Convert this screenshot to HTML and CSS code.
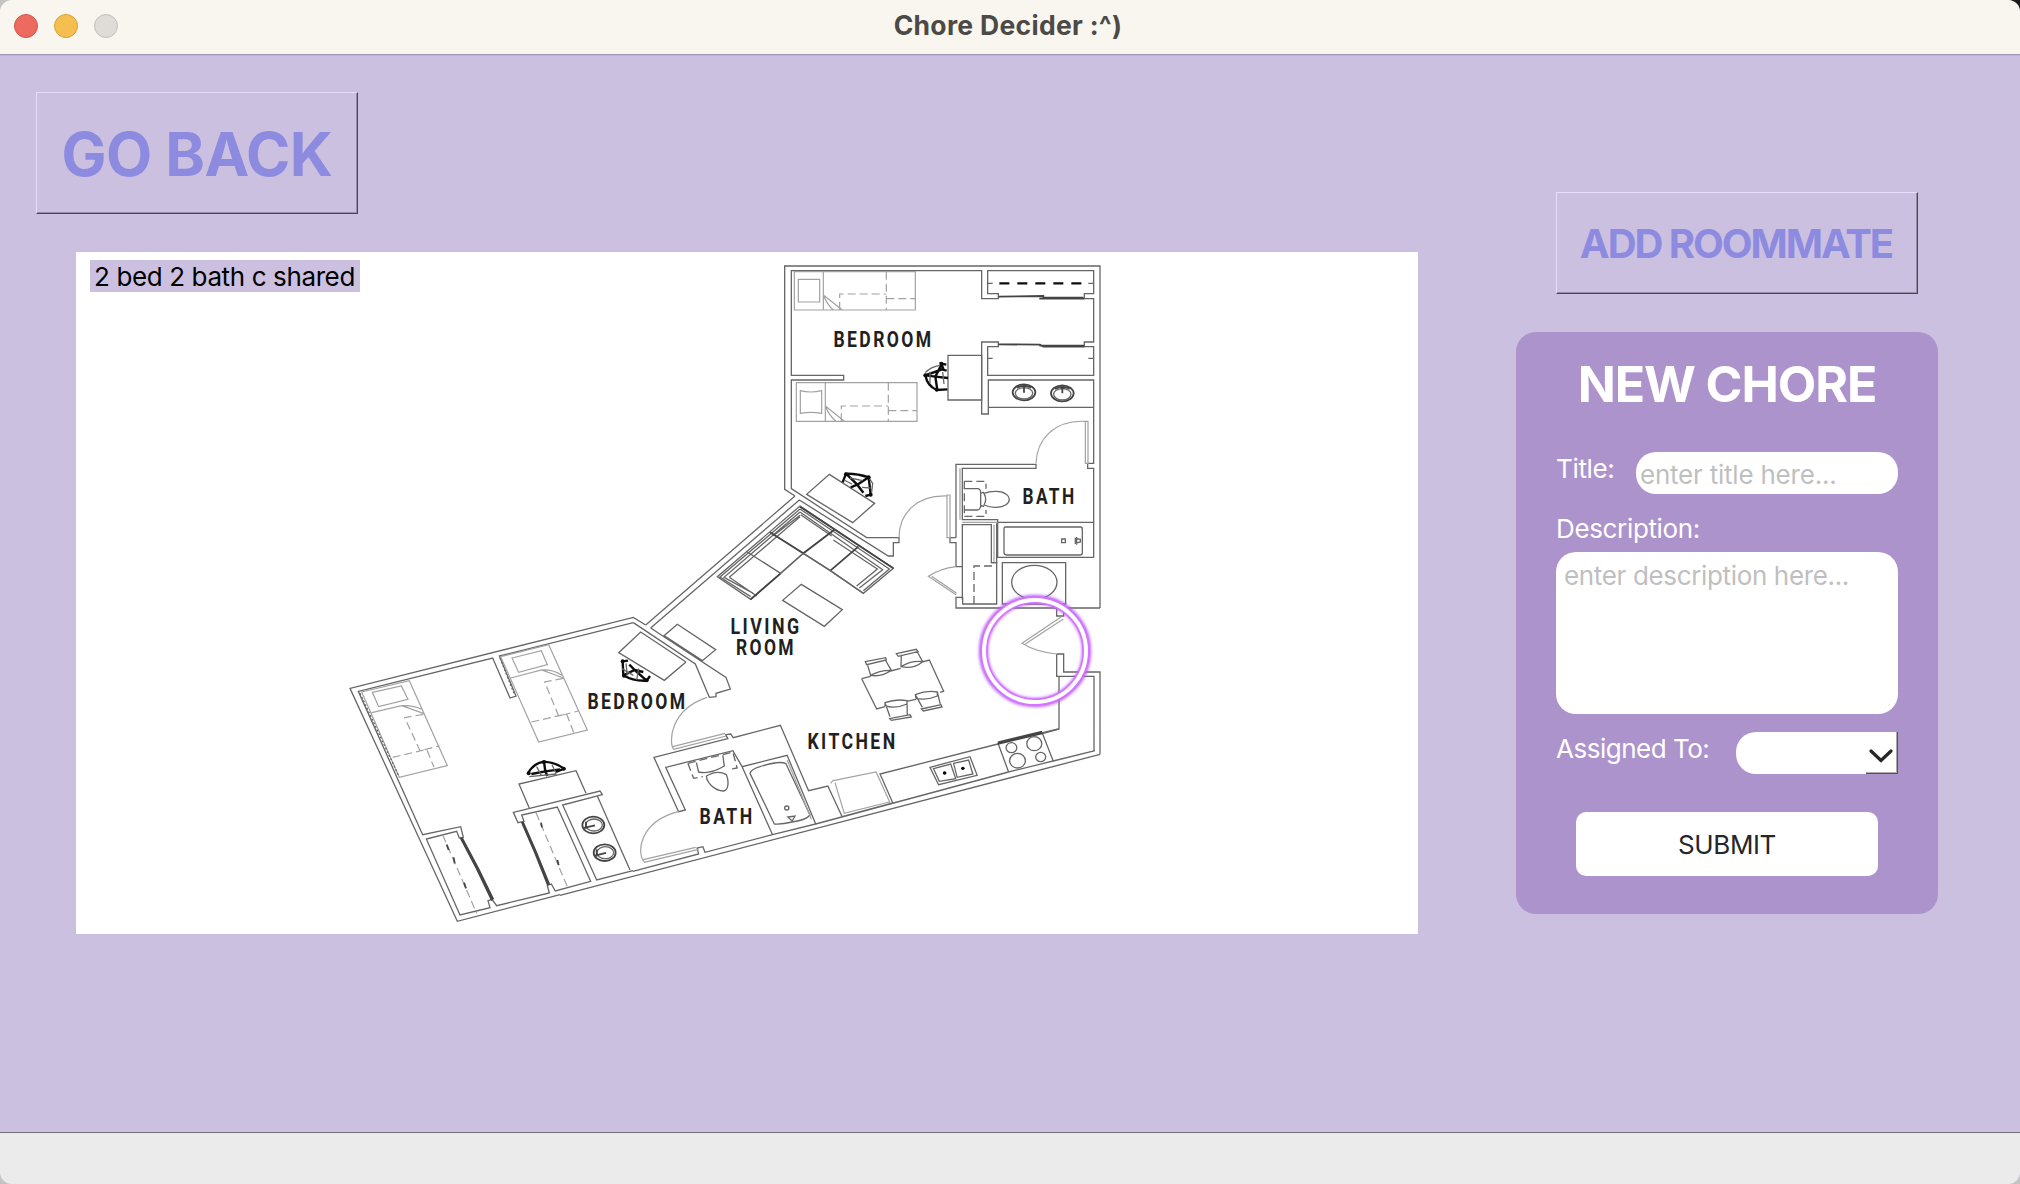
FILE: index.html
```html
<!DOCTYPE html>
<html lang="en">
<head>
<meta charset="utf-8">
<title>Chore Decider :^)</title>
<link rel="stylesheet" href="styles.css">
</head>
<body>
<div class="window">
  <header class="titlebar">
    <div class="lights"><i class="light close"></i><i class="light minimize"></i><i class="light disabled"></i></div>
    <h1 class="window-title">Chore Decider :^)</h1>
  </header>
  <main class="content">
    <section class="left">
      <button class="raised go-back"><span>GO BACK</span></button>
      <div class="plan">
        <svg class="plan-drawing" viewBox="76 252 1342 682">
          <!-- upper bedroom, closets and bath -->
          <g transform="translate(770 250) scale(.33333)">
            <path class="w" d="M75 738L44 718V48H990V1074M-373 1125L75 738M-358 1134L88 750L355 918H370V878H387V863H290L64 716V390H221V376H64V62H635V146H685V131H653V62H971V131H943V146H971V276H943V290H971V376H653V290H685V276H635V492H655V390H971V640H953V655H971V923"/>
            <path class="w" d="M655 472H971M534 316H635V450H534ZM558 863V643H798V655H577V809H683V922H971M577 1050V824H664V938H680V820M683 817H971M558 863H540V878H558V950M178 673L314 760L248 818L110 733Z"/>
            <path class="g" d="M531 735H540V863H531ZM946 514H954V640H946ZM387 863C387 790 440 735 531 738M798 640C800 570 850 510 946 514M577 817H683M570 655V809M672 824V938"/>
            <path class="g" d="M73 65H160V180H73ZM85 88H149V156H85ZM160 180H436V65H160M160 135L217 180M160 135Q172 165 190 180M79 398H166V514H79ZM91 422Q122 430 155 422V490Q122 484 91 490ZM166 514H441V398H166M166 468L223 514M166 468Q178 498 198 514"/>
            <path class="g d" d="M349 65V180M209 180V132H349M349 146H436M355 398V514M214 514V468H355M355 482H441"/>
            <path class="k" d="M688 100H945" stroke-dasharray="10 8"/>
            <path class="w" d="M653 100H668M955 100H971M653 325H668M955 325H971"/>
            <path class="m" d="M685 140L820 138V143H940M808 146H943M685 283L810 284L820 290H943M808 287H943"/>
            <ellipse class="m" cx="762" cy="427" rx="34" ry="24"/><ellipse class="w" cx="762" cy="430" rx="26" ry="17"/>
            <ellipse class="m" cx="877" cy="430" rx="34" ry="24"/><ellipse class="w" cx="877" cy="433" rx="26" ry="17"/>
            <path class="m" d="M740 413Q762 402 784 413M762 428V408L770 406M855 417Q877 404 899 417M872 414H884M877 430V414"/>
            <path class="w" d="M583 716H625Q632 718 632 730V766Q632 779 622 780H583M642 730Q660 723 680 724C706 725 718 738 718 748C718 760 704 772 680 772Q660 773 642 765Q652 748 642 730ZM632 730L642 726M632 766L642 770"/>
            <path class="w d" d="M583 694H648V716M583 799H648V780M583 694V799"/>
            <path class="k" d="M529 344L514 341L520 357L466 376Q472 408 500 420L532 418M466 376L496 380L534 384M496 380L514 345M496 380L502 420M505 356L530 362"/>
            <path class="w" d="M466 368Q482 350 510 346M480 365V400M518 366L522 402"/>
            <path class="k" d="M218 697L228 671Q262 670 296 682L302 734L286 738M228 671L262 704L296 682M262 704L242 712M262 704L280 728"/>
            <path class="w" d="M296 682L308 700L304 734M240 684L278 692M222 690L246 702M276 712L302 714"/>
            <path class="w" d="M706 831H932Q937 831 937 838V909Q937 915 930 915H710Q702 915 702 907V838Q702 831 706 831ZM875 867H886V878H875ZM916 865L931 868V876L916 880ZM920 861V884"/>
            <g class="dots"><circle cx="466" cy="376" r="6"/><circle cx="514" cy="341" r="6"/><circle cx="500" cy="420" r="5"/><circle cx="228" cy="673" r="6"/><circle cx="296" cy="682" r="6"/><circle cx="302" cy="734" r="6"/></g>
          </g>
          <!-- entry, laundry and kitchen corner -->
          <g transform="translate(920 470) scale(.33333)">
            <path class="w" d="M540 414H108V382H128V402H230V278H213M108 290H128M247 278H437V402H247ZM410 414V438H431V414M410 552H431V606H540V853M410 552V619H522V843M417 619V777L365 792"/>
            <ellipse class="w" cx="343" cy="337" rx="68" ry="51"/>
            <path class="g" d="M108 290Q60 296 25 319L108 374M35 319L110 370M424 440L306 520Q350 547 410 552M430 447L316 522"/>
            <path class="w d" d="M162 402V288H228"/>
          </g>
          <!-- living room -->
          <g transform="translate(640 490) scale(.33333)">
            <path class="w" d="M112 403L227 479L187 512L72 437ZM76 441L184 512M484 283L607 359L553 409L428 331ZM32 414L258 562L271 597L228 610V620L208 622L166 522L-20 398M138 516L73 571L-64 488L2 426L138 516"/>
            <path class="w" d="M480 48L760 235L670 310L571 242L490 190L422 250L332 328L232 260ZM480 57L748 237L670 302M480 66L728 239L658 294M480 76L400 137M482 74L575 138M480 57L240 261L332 320M480 66L252 262L340 310M268 262L350 318M268 262L480 80M580 150L712 237L650 288"/>
            <path class="m" d="M390 127L490 190L582 120M571 242L655 170M422 250L332 328M480 50L760 235"/>
            <path class="w" d="M490 190L571 242L670 310M490 190L422 250L322 186"/>
            <path class="w" d="M665 566L692 559M752 543L782 535M846 516L868 510L911 604L900 607M828 628L800 634M735 650L710 657L665 566M683 526L692 556Q725 562 754 541L736 510M690 557Q720 540 754 541M676 515L737 503L739 510L680 524ZM784 494L783 530Q820 538 848 515L832 486M783 530Q815 510 848 515M769 491L829 478L834 485L775 499ZM735 638L750 680M801 632L802 675M735 638Q768 626 801 632V642Q765 658 735 647ZM749 686L810 674L814 681L754 691ZM826 614L847 652M892 606L901 643M826 614Q860 600 892 606V618Q860 632 828 625ZM844 657L903 644L906 651L850 663Z"/>
          </g>
          <!-- lower bedroom -->
          <g transform="translate(340 610) scale(.33333)">
            <path class="w" d="M917 45L880 22L30 235L352 934L660 854M880 38L478 138L528 258L510 264L458 144L55 244L248 674L362 650L370 682L358 684L350 664L259 687L360 915L450 893L444 872L456 868L470 887L628 849L622 826L634 822L646 843L752 814L652 591L545 615L552 634L534 638L520 607L780 543L787 554L668 585L770 810L879 782M772 558L870 780M568 595L537 522L708 482L738 550"/>
            <path class="g" d="M65 246L208 212L322 467L178 502ZM97 247L184 228L204 268L116 290ZM95 308L185 287L250 310M185 287Q220 285 245 298M482 140L626 104L742 360L596 396ZM516 144L604 122L622 164L536 187ZM512 204L605 180L670 204M605 180Q640 178 665 196"/>
            <path class="g d" d="M250 313L194 323L240 422L298 408M158 442L260 418L282 472M670 205L614 216L656 318L715 303M574 336L680 312L702 370M308 675L410 910M588 608L684 835"/>
            <path class="w" d="M60 250L175 495M480 144L522 250" stroke-dasharray="2 2" stroke-width="3"/>
            <path class="m" d="M362 684L410 776L456 872M366 684L415 776L460 868M545 636L585 728L624 826M549 636L589 728L628 824M320 704L326 720M341 742L344 760M372 818L378 835M603 638L606 652M652 750L656 766"/>
            <ellipse class="m" cx="760" cy="645" rx="33" ry="25"/><ellipse class="w" cx="762" cy="645" rx="25" ry="18"/><path class="m" d="M732 654L765 646M738 635V656"/>
            <ellipse class="m" cx="794" cy="728" rx="33" ry="25"/><ellipse class="w" cx="796" cy="728" rx="25" ry="18"/><path class="m" d="M765 737L798 729M770 718V740"/>
            <path class="k" d="M564 490Q580 460 612 455Q650 458 672 476L648 486M612 455L616 484L574 492M616 484L660 478M616 484L622 498"/>
            <path class="w" d="M590 470L604 496M636 464L648 490M568 500L650 492"/>
            <path class="k" d="M848 154L850 196Q880 214 920 212L930 198M848 154L864 152M850 196L884 180L920 212M884 180L868 164M884 180L910 186"/>
            <path class="w" d="M858 160L862 196M846 176L880 196M896 176L890 210"/>
            <g class="dots"><circle cx="566" cy="490" r="6"/><circle cx="612" cy="456" r="6"/><circle cx="671" cy="476" r="6"/><circle cx="848" cy="154" r="6"/><circle cx="852" cy="197" r="6"/><circle cx="920" cy="211" r="6"/></g>
          </g>
          <!-- lower bath and kitchen counter -->
          <g transform="translate(560 680) scale(.357143 .33333)">
            <path class="w" d="M204 574L388 522L384 504L400 500L406 517L595 464L716 432L636 226L510 260L484 212L296 262L351 390L332 395L263 232L470 176L464 164L478 162L485 173L617 136L696 332L750 318L790 410L932 369L896 282L1226 192M0 646L1512 223M1381 243L1498 212M1226 188L1256 276L1381 243L1350 158L1396 147M716 432L1256 276M510 260L595 464M532 280Q535 268 560 260Q610 242 632 250L700 405Q690 420 650 426Q620 434 600 432ZM1036 262L1148 230L1168 286L1060 314ZM1046 266L1094 252L1108 296L1062 304ZM1102 250L1144 240L1156 282L1112 292Z"/>
            <path class="g" d="M318 208C305 190 305 90 412 52M318 208L465 168M316 200L462 160M235 545C215 520 220 425 332 395M235 547L388 508M233 539L380 502M765 302L885 276L924 368M770 308L796 400L922 366M758 310L765 300M636 240L704 418"/>
            <path class="m" d="M1226 192L1350 160M1226 187L1350 155"/>
            <path class="w" d="M382 248L388 276Q420 284 460 258L456 226M410 288Q440 268 466 284C472 300 474 330 458 333C430 332 410 305 410 288Z"/>
            <path class="w d" d="M358 250L374 295L400 290M358 250L484 216L496 264L476 268"/>
            <circle class="w" cx="1264" cy="203" r="15"/><circle class="w" cx="1328" cy="191" r="21"/><circle class="w" cx="1281" cy="242" r="22"/><circle class="w" cx="1346" cy="231" r="14"/>
            <circle class="w" cx="635" cy="384" r="6"/><path class="w" d="M638 411L658 408L650 423Z"/>
            <circle cx="1077" cy="279" r="5"/><circle cx="1128" cy="265" r="5"/>
          </g>
          <g class="room">
            <text x="833.5" y="347" textLength="100" lengthAdjust="spacingAndGlyphs">BEDROOM</text>
            <text x="1022.5" y="503.5" textLength="54" lengthAdjust="spacingAndGlyphs">BATH</text>
            <text x="730.5" y="633.5" textLength="71" lengthAdjust="spacingAndGlyphs">LIVING</text>
            <text x="736" y="655" textLength="60" lengthAdjust="spacingAndGlyphs">ROOM</text>
            <text x="587.5" y="708.5" textLength="100" lengthAdjust="spacingAndGlyphs">BEDROOM</text>
            <text x="807.5" y="748.5" textLength="90" lengthAdjust="spacingAndGlyphs">KITCHEN</text>
            <text x="699.5" y="823.5" textLength="55" lengthAdjust="spacingAndGlyphs">BATH</text>
          </g>
          <circle class="glow" cx="1035" cy="651" r="51.5"/>
          <circle class="ring-color" cx="1035" cy="651" r="51"/>
          <circle class="ring" cx="1035" cy="651" r="51"/>
        </svg>
        <span class="plan-name">2 bed 2 bath c shared</span>
      </div>
    </section>
    <aside class="right">
      <button class="raised add-roommate"><span>ADD ROOMMATE</span></button>
      <form class="card">
        <h2 class="card-title"><span>NEW CHORE</span></h2>
        <div class="row title-row"><label>Title:</label><div class="field title-field">enter title here...</div></div>
        <label class="description-label">Description:</label>
        <div class="field description-field">enter description here...</div>
        <div class="row assigned-row"><label>Assigned To:</label>
          <div class="combo"><span class="drop"><svg width="24" height="14" viewBox="0 0 24 14"><path d="M2 2L12 11.5L22 2" fill="none" stroke="#262626" stroke-width="3.2" stroke-linecap="round"/></svg></span></div>
        </div>
        <button type="button" class="submit">SUBMIT</button>
      </form>
    </aside>
  </main>
  <footer class="statusbar"></footer>
</div>
</body>
</html>
```
FILE: styles.css
```css
* { box-sizing: border-box; }
body { margin: 0; background: linear-gradient(90deg, transparent 50%, #1c1c1c 50%) 0 0 / 100% 100px no-repeat, #c4c4c4; font-family: Inter, "Liberation Sans", sans-serif; }
.window { width: 2020px; height: 1184px; display: flex; flex-direction: column; border-radius: 12px; overflow: hidden; background: #cbc0e0; }
.titlebar { height: 55px; flex: none; display: grid; grid-template-columns: 1fr auto 1fr; background: #f9f6ef; border-bottom: 1px solid #a295b8; }
.lights { display: flex; gap: 16px; padding: 14px 0 0 14px; }
.light { width: 24px; height: 24px; border-radius: 50%; border: 1px solid; }
.close { background: #ec6a5e; border-color: #d5554a; }
.minimize { background: #f5bf4f; border-color: #d9a13a; }
.disabled { background: #dfdcd7; border-color: #c2c0bb; }
.window-title { margin: 9px 4px 0 0; font-size: 26.5px; line-height: 32px; font-weight: 700; letter-spacing: .3px; color: #4b4a47; }
.content { flex: 1; display: flex; border-top: 1px solid #c1b5d6; }
.left { padding: 36px 0 0 36px; }
.right { width: 422px; margin-left: 98px; padding-top: 136px; }
button { font-family: inherit; padding: 0; }
.raised { display: flex; align-items: center; justify-content: center; background: #cbc0e0; color: #8d8be0; font-weight: 700; border: 1px solid; border-color: #e6dcfb #4b4556 #4b4556 #e6dcfb; box-shadow: inset -1px -1px #978ea8; white-space: nowrap; }
.go-back { width: 322px; height: 122px; padding-top: 2px; font-size: 60px; letter-spacing: -.6px; }
.add-roommate { width: 362px; height: 102px; margin-left: 40px; padding-right: 2px; font-size: 40px; letter-spacing: -2.05px; }
.plan { position: relative; width: 1342px; height: 682px; margin: 38px 0 0 40px; background: #fff; }
.plan-drawing { display: block; width: 100%; height: 100%; }
.plan-name { position: absolute; left: 14px; top: 8px; width: 270px; height: 32px; padding-left: 4px; background: #cbc0e0; color: #000; font-size: 26px; line-height: 33px; letter-spacing: -.38px; white-space: nowrap; }
.plan-drawing path, .plan-drawing ellipse, .plan-drawing circle { vector-effect: non-scaling-stroke; }
.w, .g, .m, .k { fill: none; }
.w { stroke: #666; stroke-width: 1.3; }
.g { stroke: #a2a2a2; stroke-width: 1.2; }
.m { stroke: #444; stroke-width: 1.8; }
.k { stroke: #0c0c0c; stroke-width: 2.4; }
.dots { fill: #0c0c0c; }
.d { stroke-dasharray: 8 4; }
.room { fill: #231f20; font-family: Roboto, sans-serif; font-weight: 700; font-size: 22px; letter-spacing: 3px; }
.glow { fill: none; stroke: #b95cf8; stroke-width: 9; filter: blur(1.8px); }
.ring-color { fill: none; stroke: #d873ff; stroke-width: 7; }
.ring { fill: none; stroke: #fff; stroke-width: 4; }
.card { width: 422px; height: 582px; margin: 38px 0 0; padding: 0 40px; border-radius: 20px; background: #ac93cc; color: #fff; font-size: 26px; line-height: 32px; letter-spacing: -.35px; display: flex; flex-direction: column; }
.card-title { margin: 22px 0 0; font-size: 50px; line-height: 60px; height: 60px; text-align: center; letter-spacing: -1.1px; white-space: nowrap; }
.row { display: flex; justify-content: space-between; }
.title-row { margin-top: 38px; height: 42px; }
.title-row label, .assigned-row label { padding-top: 1px; }
.assigned-row label { letter-spacing: -.5px; }
.field { background: #fff; color: #bfbfbf; border-radius: 20px; white-space: nowrap; }
.title-field { width: 262px; height: 42px; padding: 7px 0 0 4px; letter-spacing: -.22px; }
.description-label { margin-top: 19px; height: 32px; }
.description-field { height: 162px; margin-top: 7px; padding: 8px 0 0 8px; }
.assigned-row { margin-top: 18px; height: 42px; }
.combo { width: 162px; height: 42px; display: flex; justify-content: flex-end; background: #fff; border-radius: 20px 0 0 20px; }
.drop { width: 32px; display: flex; align-items: center; justify-content: center; padding: 6px 1px 0 0; border-right: 1px solid #555; border-bottom: 1px solid #555; box-shadow: inset -1px -1px #aaa; }
.submit { width: 302px; height: 64px; margin: 38px 0 0 20px; border: 0; border-radius: 10px; background: #fff; color: #262626; font-size: 26px; letter-spacing: -.4px; }
.statusbar { height: 52px; flex: none; border-top: 1px solid #727076; background: #ebebeb; }
```
